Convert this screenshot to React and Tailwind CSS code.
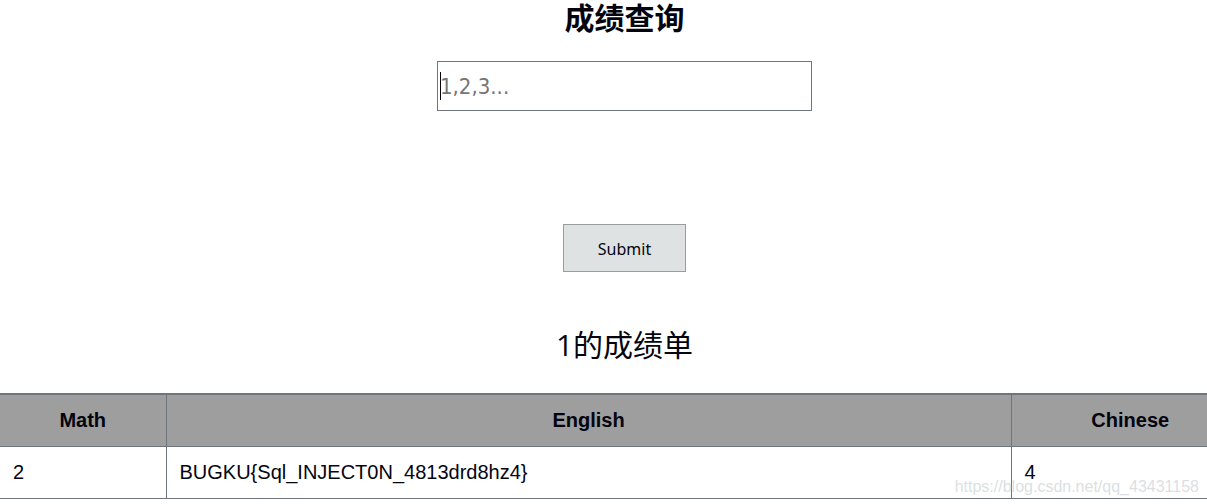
export default function App() {
  return (
    <div className="relative overflow-hidden bg-white pb-1 text-[#04040f]">
      <main className="w-[calc(100%+42px)] font-['Liberation_Sans','Noto_Sans_CJK_SC',sans-serif]">
        <form
          className="flex flex-col items-center"
          onSubmit={(event) => event.preventDefault()}
        >
          <h1 className="mb-6 text-[30px] leading-[37px] font-bold">
            <label htmlFor="student">成绩查询</label>
          </h1>
          <div className="relative mb-[113px] w-[375px]">
            <input
              id="student"
              type="text"
              placeholder="1,2,3..."
              className="block h-[50px] w-full border border-[#70757c] px-0.5 font-['DejaVu_Sans_Condensed','Noto_Sans',sans-serif] text-[22px] caret-transparent outline-none placeholder:text-[#757575]"
            />
            <span className="absolute top-[11px] left-[3px] h-7 w-px bg-[#04040f]" />
          </div>
          <button
            type="submit"
            className="mb-12 h-12 w-[123px] border border-[#9a9da0] bg-[#dee2e3] pt-0.5 font-['Noto_Sans',sans-serif] text-base"
          >
            Submit
          </button>
        </form>
        <table className="w-full table-fixed border-collapse text-xl leading-6">
          <caption className="mb-6 font-['Open_Sans','Noto_Sans_CJK_SC',sans-serif] text-[30px] leading-[49px]">
            1的成绩单
          </caption>
          <colgroup>
            <col className="w-[166px]" />
            <col />
            <col className="w-[238px]" />
          </colgroup>
          <thead>
            <tr className="h-[52px] border-t-2 border-b border-[#70757c] bg-[#9e9e9e]">
              <th scope="col" className="border-r border-[#70757c] px-3">Math</th>
              <th scope="col" className="border-r border-[#70757c] px-3">English</th>
              <th scope="col" className="px-3">Chinese</th>
            </tr>
          </thead>
          <tbody>
            <tr className="h-[52px] border-b border-[#70757c]">
              <td className="border-r border-[#70757c] px-[13px]">2</td>
              <td className="border-r border-[#70757c] px-[13px]">
                BUGKU&#123;Sql_INJECT0N_4813drd8hz4&#125;
              </td>
              <td className="px-[13px]">4</td>
            </tr>
          </tbody>
        </table>
      </main>
      <span className="absolute right-2 bottom-1.5 font-['Liberation_Sans',sans-serif] text-base leading-5 text-[#dcdfe2]">
        https://blog.csdn.net/qq_43431158
      </span>
    </div>
  );
}
